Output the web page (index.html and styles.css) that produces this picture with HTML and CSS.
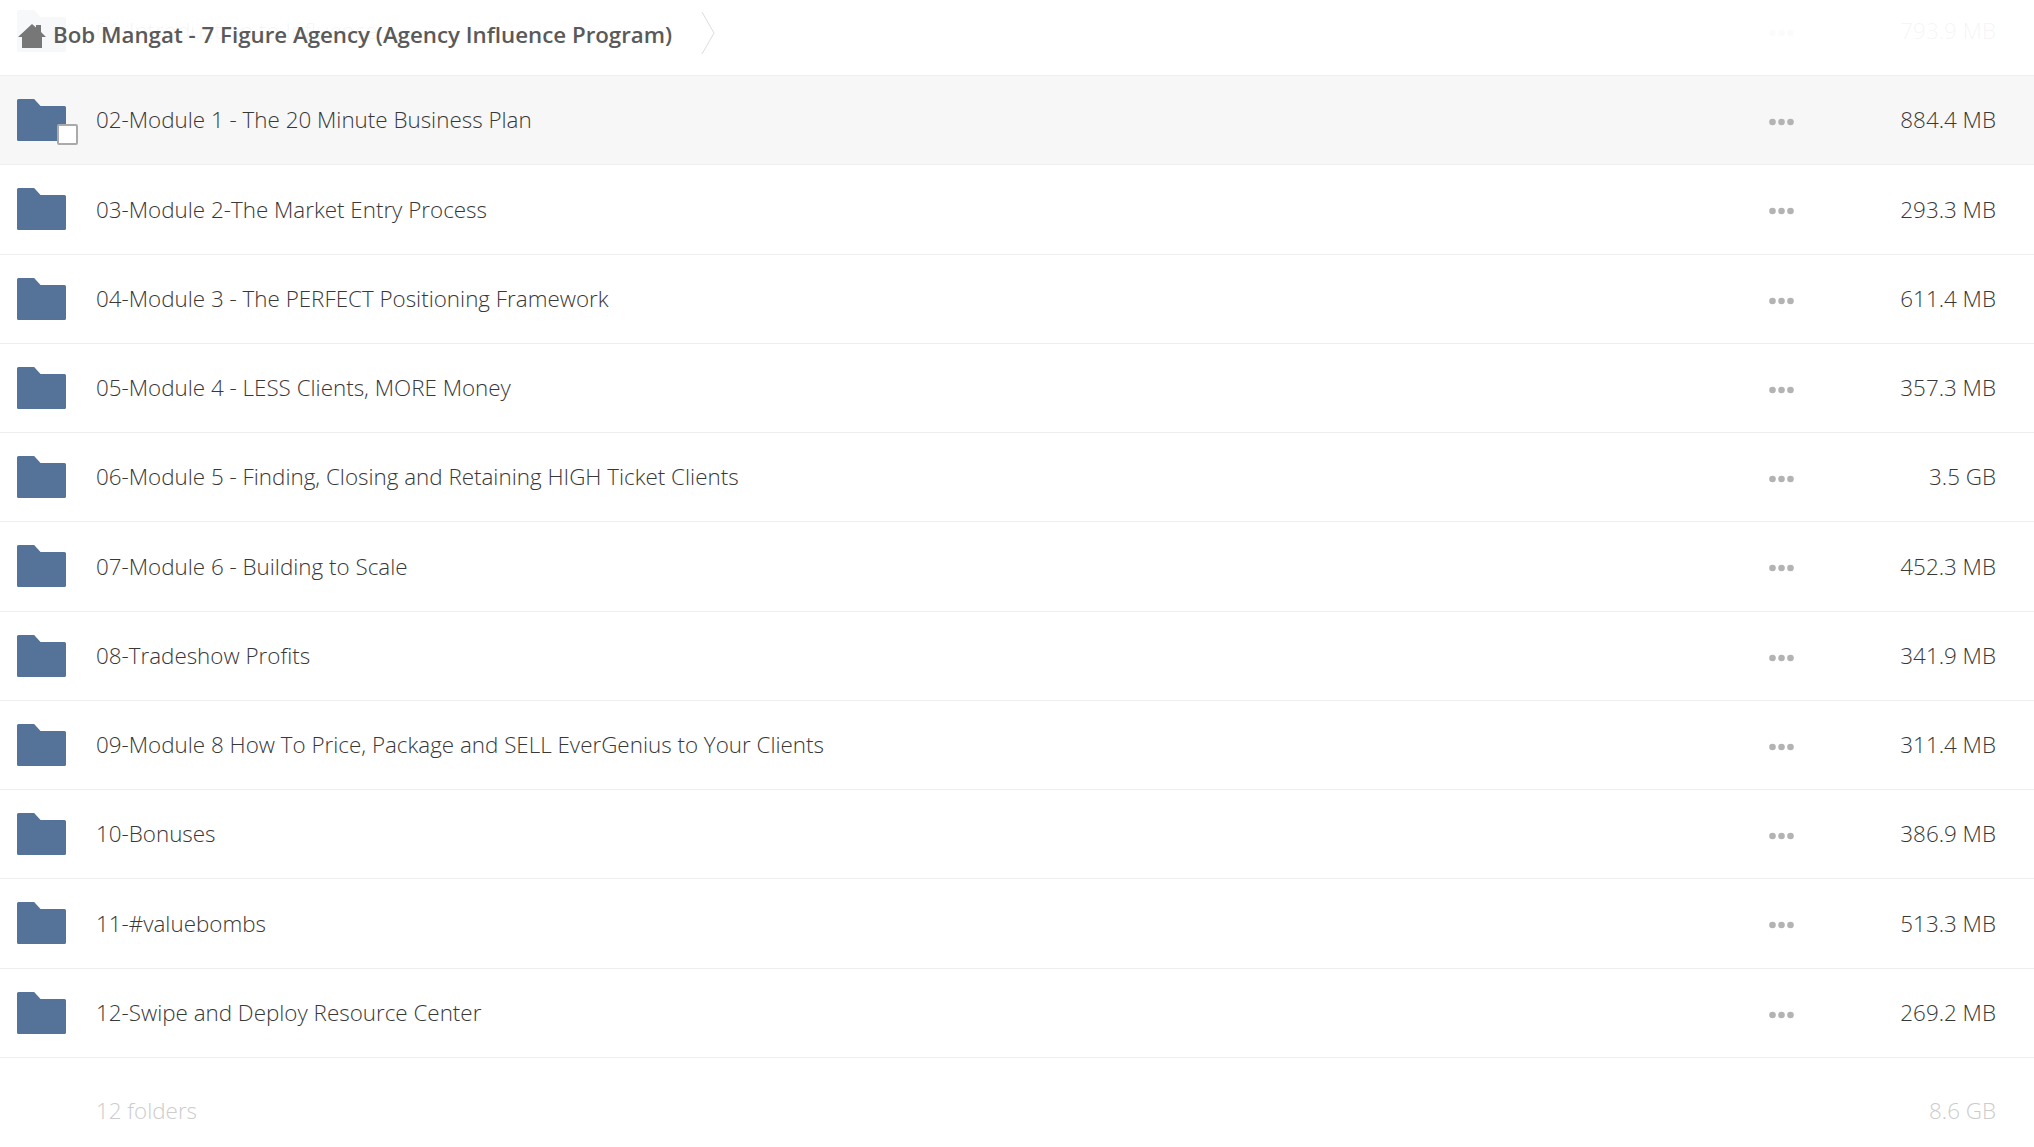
FILE: index.html
```html
<!DOCTYPE html>
<html lang="en">
<head>
<meta charset="utf-8">
<title>Bob Mangat - 7 Figure Agency</title>
<link rel="stylesheet" href="styles.css">
</head>
<body>
<svg class="defs" width="0" height="0" aria-hidden="true">
  <symbol id="folder" viewBox="0 0 50 42" preserveAspectRatio="none">
    <path d="M1.500 0H17.500L24 7H48.500A1.500 1.500 0 0 1 50 8.500V40.500A1.500 1.500 0 0 1 48.500 42H1.500A1.500 1.500 0 0 1 0 40.500V1.500A1.500 1.500 0 0 1 1.500 0Z" fill="#557299"/>
  </symbol>
  <symbol id="dots" viewBox="0 0 25 8">
    <circle cx="3.500" cy="4" r="3.300" fill="#b3b3b3"/>
    <circle cx="12.500" cy="4" r="3.300" fill="#b3b3b3"/>
    <circle cx="21.500" cy="4" r="3.300" fill="#b3b3b3"/>
  </symbol>
</svg>

<header class="crumb">
  <svg class="home" viewBox="0 0 28 26" aria-hidden="true"><path d="M0 14L14 1L18 4.500V2H23V9L28 14H24V25H4V14Z" fill="#777"/></svg>
  <span class="crumb-title">Bob Mangat - 7 Figure Agency (Agency Influence Program)</span>
  <svg class="chev" viewBox="0 0 14 44" aria-hidden="true"><path d="M1 1L13 22L1 43" fill="none" stroke="#ddd" stroke-width="1"/></svg>
</header>

<main class="list">
  <div class="row"><svg class="folder"><use href="#folder"/></svg><span class="name">01-Introduction to Influence</span><svg class="dots"><use href="#dots"/></svg><span class="size">793.9 MB</span></div>
  <div class="row hover"><span class="thumb"><svg class="folder"><use href="#folder"/></svg><span class="check"></span></span><span class="name">02-Module 1 - The 20 Minute Business Plan</span><svg class="dots"><use href="#dots"/></svg><span class="size">884.4 MB</span></div>
  <div class="row"><svg class="folder"><use href="#folder"/></svg><span class="name">03-Module 2-The Market Entry Process</span><svg class="dots"><use href="#dots"/></svg><span class="size">293.3 MB</span></div>
  <div class="row"><svg class="folder"><use href="#folder"/></svg><span class="name">04-Module 3 - The PERFECT Positioning Framework</span><svg class="dots"><use href="#dots"/></svg><span class="size">611.4 MB</span></div>
  <div class="row"><svg class="folder"><use href="#folder"/></svg><span class="name">05-Module 4 - LESS Clients, MORE Money</span><svg class="dots"><use href="#dots"/></svg><span class="size">357.3 MB</span></div>
  <div class="row"><svg class="folder"><use href="#folder"/></svg><span class="name">06-Module 5 - Finding, Closing and Retaining HIGH Ticket Clients</span><svg class="dots"><use href="#dots"/></svg><span class="size">3.5 GB</span></div>
  <div class="row"><svg class="folder"><use href="#folder"/></svg><span class="name">07-Module 6 - Building to Scale</span><svg class="dots"><use href="#dots"/></svg><span class="size">452.3 MB</span></div>
  <div class="row"><svg class="folder"><use href="#folder"/></svg><span class="name">08-Tradeshow Profits</span><svg class="dots"><use href="#dots"/></svg><span class="size">341.9 MB</span></div>
  <div class="row"><svg class="folder"><use href="#folder"/></svg><span class="name">09-Module 8 How To Price, Package and SELL EverGenius to Your Clients</span><svg class="dots"><use href="#dots"/></svg><span class="size">311.4 MB</span></div>
  <div class="row"><svg class="folder"><use href="#folder"/></svg><span class="name">10-Bonuses</span><svg class="dots"><use href="#dots"/></svg><span class="size">386.9 MB</span></div>
  <div class="row"><svg class="folder"><use href="#folder"/></svg><span class="name">11-#valuebombs</span><svg class="dots"><use href="#dots"/></svg><span class="size">513.3 MB</span></div>
  <div class="row"><svg class="folder"><use href="#folder"/></svg><span class="name">12-Swipe and Deploy Resource Center</span><svg class="dots"><use href="#dots"/></svg><span class="size">269.2 MB</span></div>
  <div class="summary"><span class="name">12 folders</span><span class="size">8.6 GB</span></div>
</main>
</body>
</html>
```

FILE: styles.css
```css
html, body {
  margin: 0;
  height: 1147px;
  overflow: hidden;
  background: #fff;
}
body {
  font-family: "Open Sans", "Liberation Sans", sans-serif;
  font-weight: 300;
  font-size: 22.400px;
  color: #383838;
  position: relative;
}
.defs { position: absolute; }

.crumb {
  position: absolute;
  top: 0;
  left: 0;
  right: 0;
  height: 75px;
  z-index: 2;
  display: flex;
  align-items: center;
  padding-left: 18px;
  background: rgba(255, 255, 255, 0.95);
}
.home { width: 28px; height: 26px; margin-right: 7px; margin-top: -3px; }
.crumb-title {
  font-weight: 600;
  font-size: 22.300px;
  color: #5a5a5a;
  margin-top: -6px;
}
.chev { width: 14px; height: 44px; margin-left: 29px; margin-top: -9px; }

.list { margin-top: -13.300px; }
.row {
  box-sizing: border-box;
  height: 89.270px;
  display: flex;
  align-items: center;
  border-bottom: 1px solid #eee;
  padding: 0 38px 0 17.400px;
}
.row.hover { background: #f7f7f7; }
.folder { width: 49px; height: 42px; flex: none; }
.thumb { position: relative; display: flex; width: 49px; height: 42px; flex: none; }
.check {
  position: absolute;
  left: 39.600px;
  top: 25px;
  width: 17px;
  height: 17px;
  background: #fff;
  border: 2px solid #aaa;
  border-radius: 2px;
}
.name { flex: 1; margin-left: 29.600px; padding-bottom: 0.500px; }
.dots { width: 25px; height: 8px; flex: none; margin-top: 4px; margin-right: -8px; }
.size { width: 210px; text-align: right; flex: none; padding-bottom: 0.500px; }
.summary {
  display: flex;
  align-items: center;
  height: 106px;
  padding: 0 38px 0 66.400px;
  color: #ccc;
}
```
